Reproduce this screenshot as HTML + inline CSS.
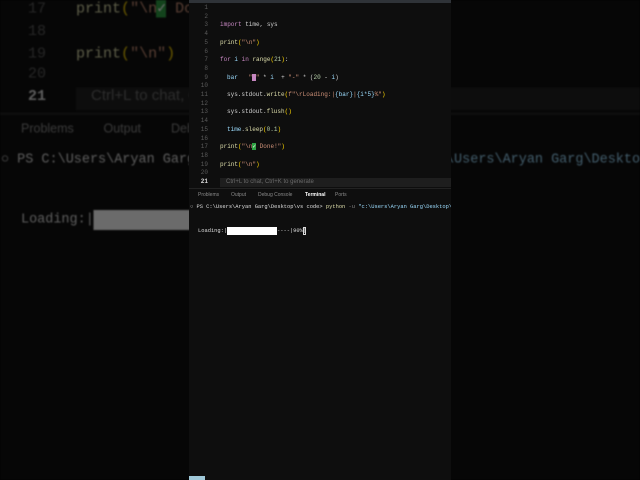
<!DOCTYPE html>
<html><head><meta charset="utf-8"><style>
*{margin:0;padding:0;box-sizing:border-box}
html,body{width:640px;height:480px;overflow:hidden;background:#000}
.bgwrap{position:absolute;left:0;top:0;width:640px;height:480px;overflow:hidden;filter:brightness(0.42) blur(0.8px)}
.scaled{position:absolute;left:0;top:0;width:640px;height:480px;transform-origin:0 0;transform:translate(-474px,-357.5px) scale(2.5)}
.panel{position:absolute;left:189px;top:0;width:262px;height:480px;background:#0e0e0e;overflow:hidden;font-family:"Liberation Mono",monospace;font-size:6px;color:#cfcfcf}
.panel div{position:absolute;white-space:pre;line-height:8px}
.ln{left:0;width:19px;text-align:right;color:#5a5a5a}
.c{left:31px}.ci{left:38px}
.k{color:#c586c0}.f{color:#dcdcaa}.s{color:#ce9178}.n{color:#b5cea8}.v{color:#9cdcfe}.y{color:#ffd700}
.top{left:0;top:0;width:262px;height:3px;background:#2f3338}
</style></head><body>
<div class="bgwrap"><div class="scaled">
<div class="panel" id="p1"></div>
</div></div>
<div class="panel" id="p2"></div>
<script>
var h='<div class="top"></div>';
var code={3:'<span class="k">import</span> time, sys',5:'<span class="f">print</span><span class="y">(</span><span class="s">"\\n"</span><span class="y">)</span>',
7:'<span class="k">for</span> <span class="v">i</span> <span class="k">in</span> <span class="f">range</span><span class="y">(</span><span class="n">21</span><span class="y">)</span>:',
17:'<span class="f">print</span><span class="y">(</span><span class="s">"\\n</span><span style="background:#2ea043;color:#fff">✓</span><span class="s"> Done!"</span><span class="y">)</span>',
19:'<span class="f">print</span><span class="y">(</span><span class="s">"\\n"</span><span class="y">)</span>'};
var ind={9:'<span class="v">bar</span>   <span class="s">"</span><span style="background:#c586c0">&nbsp;</span><span class="s">"</span> * <span class="v">i</span>  + <span class="s">"-"</span> * (<span class="n">20</span> - <span class="v">i</span>)',
11:'sys.stdout.<span class="f">write</span><span class="y">(</span><span class="s">f"\\rLoading:|</span><span class="v">{bar}</span><span class="s">|</span><span class="v">{i*5}</span><span class="s">%"</span><span class="y">)</span>',
13:'sys.stdout.<span class="f">flush</span><span class="y">()</span>',15:'<span class="v">time</span>.<span class="f">sleep</span><span class="y">(</span><span class="n">0.1</span><span class="y">)</span>'};
for(var n=1;n<=21;n++){var t=4+(n-1)*8.7;
if(n==21)h+='<div style="left:31px;top:'+(t-0.5)+'px;width:231px;height:9px;background:#1e1e1e;color:#6a6a6a;font-family:Liberation Sans,sans-serif;font-size:6px;padding-left:6px;line-height:9px">Ctrl+L to chat, Ctrl+K to generate</div>';
h+='<div class="ln" style="top:'+t+'px;'+(n==21?'color:#ddd;font-weight:bold':'')+'">'+n+'</div>';
if(code[n])h+='<div class="c" style="top:'+t+'px">'+code[n]+'</div>';
if(ind[n])h+='<div class="ci" style="top:'+t+'px">'+ind[n]+'</div>';}
h+='<div style="left:0;top:188px;width:262px;height:1px;background:#222"></div>';
var tabs=[['Problems',9],['Output',42],['Debug Console',69],['Terminal',116],['Ports',146]];
tabs.forEach(function(a){h+='<div style="left:'+a[1]+'px;top:191px;font-family:Liberation Sans,sans-serif;font-size:5px;color:'+(a[0]=='Terminal'?'#fff;font-weight:bold':'#8a8a8a')+'">'+a[0]+'</div>'});
h+='<div style="left:1px;top:203px;color:#ddd;font-size:5.4px">○ PS C:\\Users\\Aryan Garg\\Desktop\\vs code&gt; <span class="f">python</span> <span style="color:#888">-u</span> <span class="v">"c:\\Users\\Aryan Garg\\Desktop\\vs code\\loading.py"</span></div>';
h+='<div style="left:9px;top:227px;color:#ddd;font-size:5.4px">Loading:|</div>';
h+='<div style="left:38px;top:227px;width:50px;height:8px;background:#fff"></div>';
h+='<div style="left:88px;top:227px;color:#ddd;font-size:5.4px">----|90%|</div>';
h+='<div style="left:114px;top:227px;width:3px;height:8px;border:1px solid #ddd"></div>';
h+='<div style="left:0;top:476px;width:16px;height:4px;background:#9fc8d8"></div>';
document.getElementById('p1').innerHTML=h;document.getElementById('p2').innerHTML=h;
</script>
</body></html>
